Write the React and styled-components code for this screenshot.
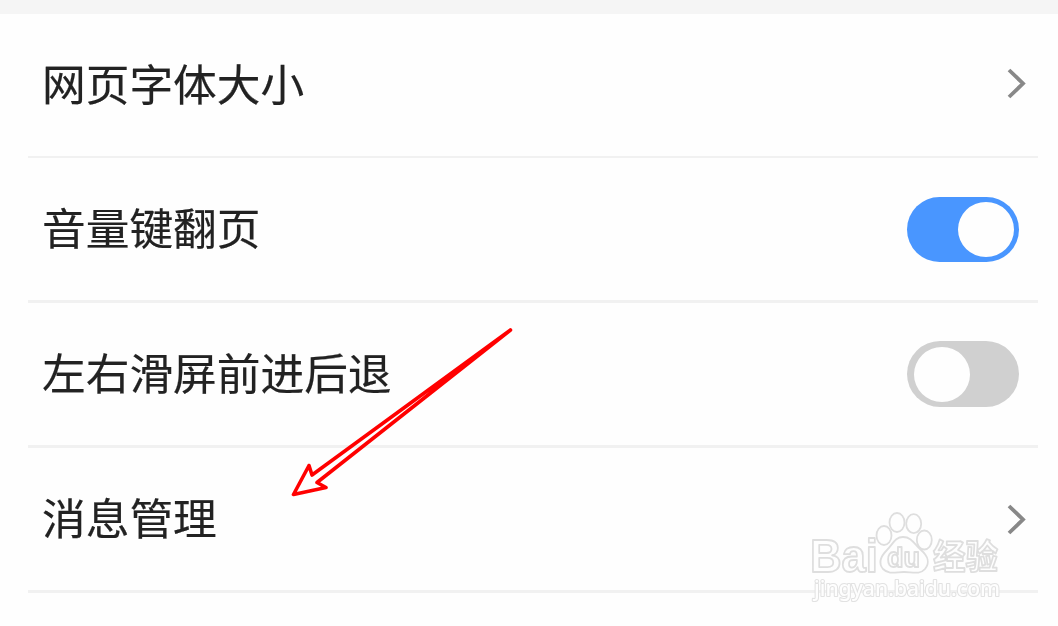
import styled, { createGlobalStyle } from "styled-components";

const GlobalStyle = createGlobalStyle`
  * {
    box-sizing: border-box;
  }
  body {
    margin: 0;
    background: #fefefe;
    font-family: "Noto Sans CJK SC", "Noto Sans", sans-serif;
  }
`;

const StyledPage = styled.main`
  position: relative;
  width: 1058px;
  height: 626px;
  overflow: hidden;
  border-top: 14px solid #f5f5f5;
`;

const StyledList = styled.ul`
  margin: 0;
  padding: 0 20px 0 28px;
  list-style: none;
`;

const StyledRow = styled.li`
  display: flex;
  justify-content: space-between;
  align-items: center;
  height: ${({ $first }) => ($first ? "144px" : "145px")};
  padding-left: 13.5px;
  padding-right: ${({ $link }) => ($link ? "11px" : "19px")};
  border-bottom: ${({ $first }) => ($first ? "2px" : "3px")} solid #f1f1f1;
  > svg {
    margin-bottom: ${({ $first }) => ($first ? "4px" : "0")};
  }
`;

const StyledLabel = styled.span`
  padding-bottom: 6px;
  color: #222;
  font-size: 43.7px;
  line-height: 64px;
  white-space: nowrap;
  -webkit-text-stroke: 0.2px #222;
  will-change: transform;
`;

const StyledSwitch = styled.button`
  display: flex;
  align-items: center;
  justify-content: ${({ $on }) => ($on ? "flex-end" : "flex-start")};
  width: 112px;
  height: ${({ $on }) => ($on ? "65px" : "66px")};
  margin: ${({ $on }) => ($on ? "1px 0 0" : "0")};
  padding: ${({ $on }) => ($on ? "0 5px" : "0 7px")};
  border: 0;
  border-radius: 33px;
  background: ${({ $on }) => ($on ? "#4996ff" : "#d0d0d0")};
`;

const StyledKnob = styled.span`
  width: 56px;
  height: 55px;
  border-radius: 50%;
  background: #fefefe;
`;

const StyledOverlay = styled.svg`
  position: absolute;
  top: -14px;
  left: 0;
  pointer-events: none;
  will-change: transform;
`;

const StyledMark = styled.g`
  fill: #fefefe;
  stroke: #dedede;
  stroke-width: 1.8;
  stroke-linejoin: round;
  text {
    font-family: "Liberation Sans", "Noto Sans CJK SC", sans-serif;
  }
`;

const StyledAddress = styled.text`
  && {
    font-family: "Noto Sans", sans-serif;
  }
  font-size: 22px;
  font-weight: 500;
  stroke: #e2e2e2;
  stroke-width: 2.2;
  paint-order: stroke;
`;

const rows = [
  { label: "网页字体大小", link: true },
  { label: "音量键翻页", on: true },
  { label: "左右滑屏前进后退", on: false },
  { label: "消息管理", link: true },
];

function Chevron() {
  return (
    <svg width="20" height="32" viewBox="0 0 20 32" fill="none">
      <path d="M2 3L16 16.5L2 30" stroke="#888" strokeWidth="3.8" />
    </svg>
  );
}

function Switch({ on }) {
  return (
    <StyledSwitch $on={on} role="switch" aria-checked={on}>
      <StyledKnob />
    </StyledSwitch>
  );
}

function Watermark() {
  return (
    <StyledMark>
      <text x="810" y="572" fontSize="46" fontWeight="700" textLength="68" lengthAdjust="spacingAndGlyphs">Bai</text>
      <ellipse cx="884" cy="535.5" rx="7.5" ry="9.5" />
      <ellipse cx="897" cy="522.5" rx="7.5" ry="9.5" />
      <ellipse cx="913.7" cy="523.7" rx="7.5" ry="9.5" />
      <ellipse cx="924.3" cy="540" rx="7.5" ry="9.5" />
      <path d="M903 537C912 537 914 544 921 550C928 556 930 563 925 569C920 575 912 572 904 572C896 572 889 575 883 569C878 563 881 556 887 550C893 544 895 537 903 537Z" />
      <text x="887" y="567" fontSize="27" fontWeight="700" textLength="33" lengthAdjust="spacingAndGlyphs">du</text>
      <text x="933" y="569" fontSize="34" fontWeight="700" textLength="65" lengthAdjust="spacingAndGlyphs">经验</text>
      <StyledAddress x="814" y="596" textLength="186" lengthAdjust="spacingAndGlyphs">jingyan.baidu.com</StyledAddress>
    </StyledMark>
  );
}

export default function App() {
  return (
    <>
      <GlobalStyle />
      <StyledPage>
        <StyledList>
          {rows.map((row, index) => (
            <StyledRow key={row.label} $first={index === 0} $link={row.link}>
              <StyledLabel>{row.label}</StyledLabel>
              {row.link ? <Chevron /> : <Switch on={row.on} />}
            </StyledRow>
          ))}
        </StyledList>
        <StyledOverlay width="1058" height="626" viewBox="0 0 1058 626">
          <Watermark />
          <path
            d="M510.5 330L312 475L309 465.5L293.5 494.5L326 487.5L317 482.5Z"
            fill="none"
            stroke="#ff0000"
            strokeWidth="3.6"
            strokeLinejoin="round"
          />
        </StyledOverlay>
      </StyledPage>
    </>
  );
}
